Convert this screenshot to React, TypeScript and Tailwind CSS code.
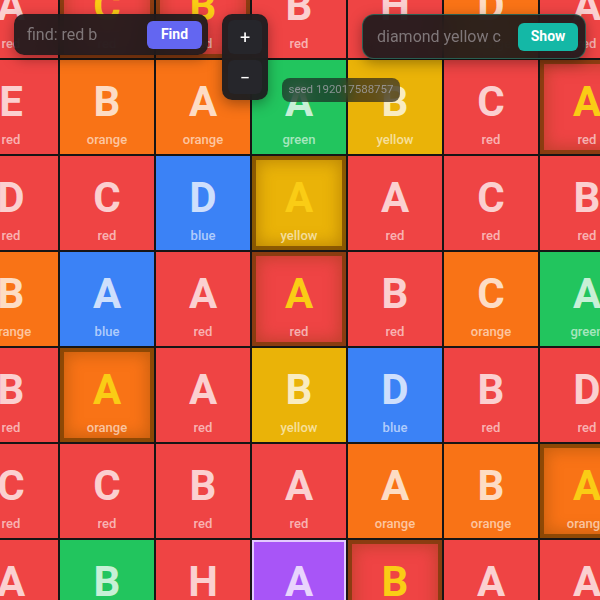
import { useState } from 'react'

type Tone = 'red' | 'orange' | 'yellow' | 'green' | 'blue' | 'purple'

type Cell = {
  letter: string
  tone: Tone
  hit?: boolean
  selected?: boolean
}

const toneBg: Record<Tone, string> = {
  red: 'bg-[#ef4444]',
  orange: 'bg-[#f97316]',
  yellow: 'bg-[#eab308]',
  green: 'bg-[#22c55e]',
  blue: 'bg-[#3b82f6]',
  purple: 'bg-[#a855f7]',
}

const c = (letter: string, tone: Tone, hit = false, selected = false): Cell => ({
  letter,
  tone,
  hit,
  selected,
})

const board: Cell[][] = [
  [c('A', 'red'), c('C', 'red', true), c('B', 'red', true), c('B', 'red'), c('H', 'red'), c('D', 'orange'), c('A', 'red')],
  [c('E', 'red'), c('B', 'orange'), c('A', 'orange'), c('A', 'green'), c('B', 'yellow'), c('C', 'red'), c('A', 'red', true)],
  [c('D', 'red'), c('C', 'red'), c('D', 'blue'), c('A', 'yellow', true), c('A', 'red'), c('C', 'red'), c('B', 'red')],
  [c('B', 'orange'), c('A', 'blue'), c('A', 'red'), c('A', 'red', true), c('B', 'red'), c('C', 'orange'), c('A', 'green')],
  [c('B', 'red'), c('A', 'orange', true), c('A', 'red'), c('B', 'yellow'), c('D', 'blue'), c('B', 'red'), c('D', 'red')],
  [c('C', 'red'), c('C', 'red'), c('B', 'red'), c('A', 'red'), c('A', 'orange'), c('B', 'orange'), c('A', 'orange', true)],
  [c('A', 'red'), c('B', 'green'), c('H', 'red'), c('A', 'purple', false, true), c('B', 'red', true), c('A', 'red'), c('A', 'red')],
]

function BoardCell({ cell }: { cell: Cell }) {
  const ring = cell.hit
    ? 'shadow-[inset_0_0_0_4px_rgba(105,58,0,0.66),inset_0_0_16px_6px_rgba(105,58,0,0.35)]'
    : cell.selected
      ? 'shadow-[inset_0_0_0_2px_rgba(237,222,255,0.85)]'
      : ''

  return (
    <div className={`flex h-[94px] w-[94px] flex-col items-center pt-[21px] ${toneBg[cell.tone]} ${ring}`}>
      <span
        className={`text-[42px] font-bold leading-[42px] ${cell.hit ? 'text-[#facc15]' : 'text-white/75'}`}
      >
        {cell.letter}
      </span>
      <span className="mt-[9px] text-[13px] font-medium leading-[16px] text-white/60">{cell.tone}</span>
    </div>
  )
}

export default function App() {
  const [findText, setFindText] = useState('')
  const [showText, setShowText] = useState('')

  return (
    <div className="relative h-[600px] w-[600px] overflow-hidden bg-[#171515] font-['Roboto',sans-serif]">
      <div className="-ml-[36px] -mt-[36px] grid w-max grid-cols-[repeat(7,94px)] gap-[2px]">
        {board.flat().map((cell, i) => (
          <BoardCell key={i} cell={cell} />
        ))}
      </div>

      {/* search */}
      <div className="absolute left-[14px] top-[14px] flex h-[41px] w-[194px] items-center rounded-[10px] bg-[#18181b]/90 pl-[13px] pr-[6px] shadow-[0_4px_14px_rgba(0,0,0,0.35)] backdrop-blur-md">
        <input
          value={findText}
          onChange={(e) => setFindText(e.target.value)}
          placeholder="find: red b"
          className="w-[114px] bg-transparent text-[16px] text-zinc-200 outline-none placeholder:text-[#7f7779]"
        />
        <button
          type="button"
          className="ml-auto h-[28px] w-[55px] rounded-[6px] bg-[#6366f1] text-[14px] font-bold text-white"
        >
          Find
        </button>
      </div>

      {/* zoom */}
      <div className="absolute left-[222px] top-[14px] flex flex-col gap-[6px] rounded-[10px] bg-[#1c1c20]/95 p-[6px] shadow-[0_4px_14px_rgba(0,0,0,0.35)] backdrop-blur-md">
        <button
          type="button"
          className="flex h-[34px] w-[34px] items-center justify-center rounded-[6px] bg-[#26262b] text-[18px] text-white"
        >
          +
        </button>
        <button
          type="button"
          className="flex h-[34px] w-[34px] items-center justify-center rounded-[6px] bg-[#26262b] text-[18px] text-white"
        >
          −
        </button>
      </div>

      {/* seed */}
      <div className="absolute left-[282px] top-[78px] flex h-[24px] w-[118px] items-center justify-center rounded-[8px] bg-[#18181b]/65 text-[11.5px] text-[#a1a1aa]/80 backdrop-blur-sm">
        seed 192017588757
      </div>

      {/* show */}
      <div className="absolute left-[362px] top-[14px] flex h-[45px] w-[224px] items-center rounded-[12px] border border-[#2c7a68]/70 bg-[#18181b]/90 pl-[14px] pr-[7px] shadow-[0_4px_14px_rgba(0,0,0,0.35)] backdrop-blur-md">
        <input
          value={showText}
          onChange={(e) => setShowText(e.target.value)}
          placeholder="diamond yellow c"
          className="w-[132px] bg-transparent text-[16px] text-zinc-200 outline-none placeholder:text-[#7f7779]"
        />
        <button
          type="button"
          className="ml-auto h-[28px] w-[60px] rounded-[6px] bg-[#14b8a6] text-[14px] font-bold text-white"
        >
          Show
        </button>
      </div>
    </div>
  )
}
